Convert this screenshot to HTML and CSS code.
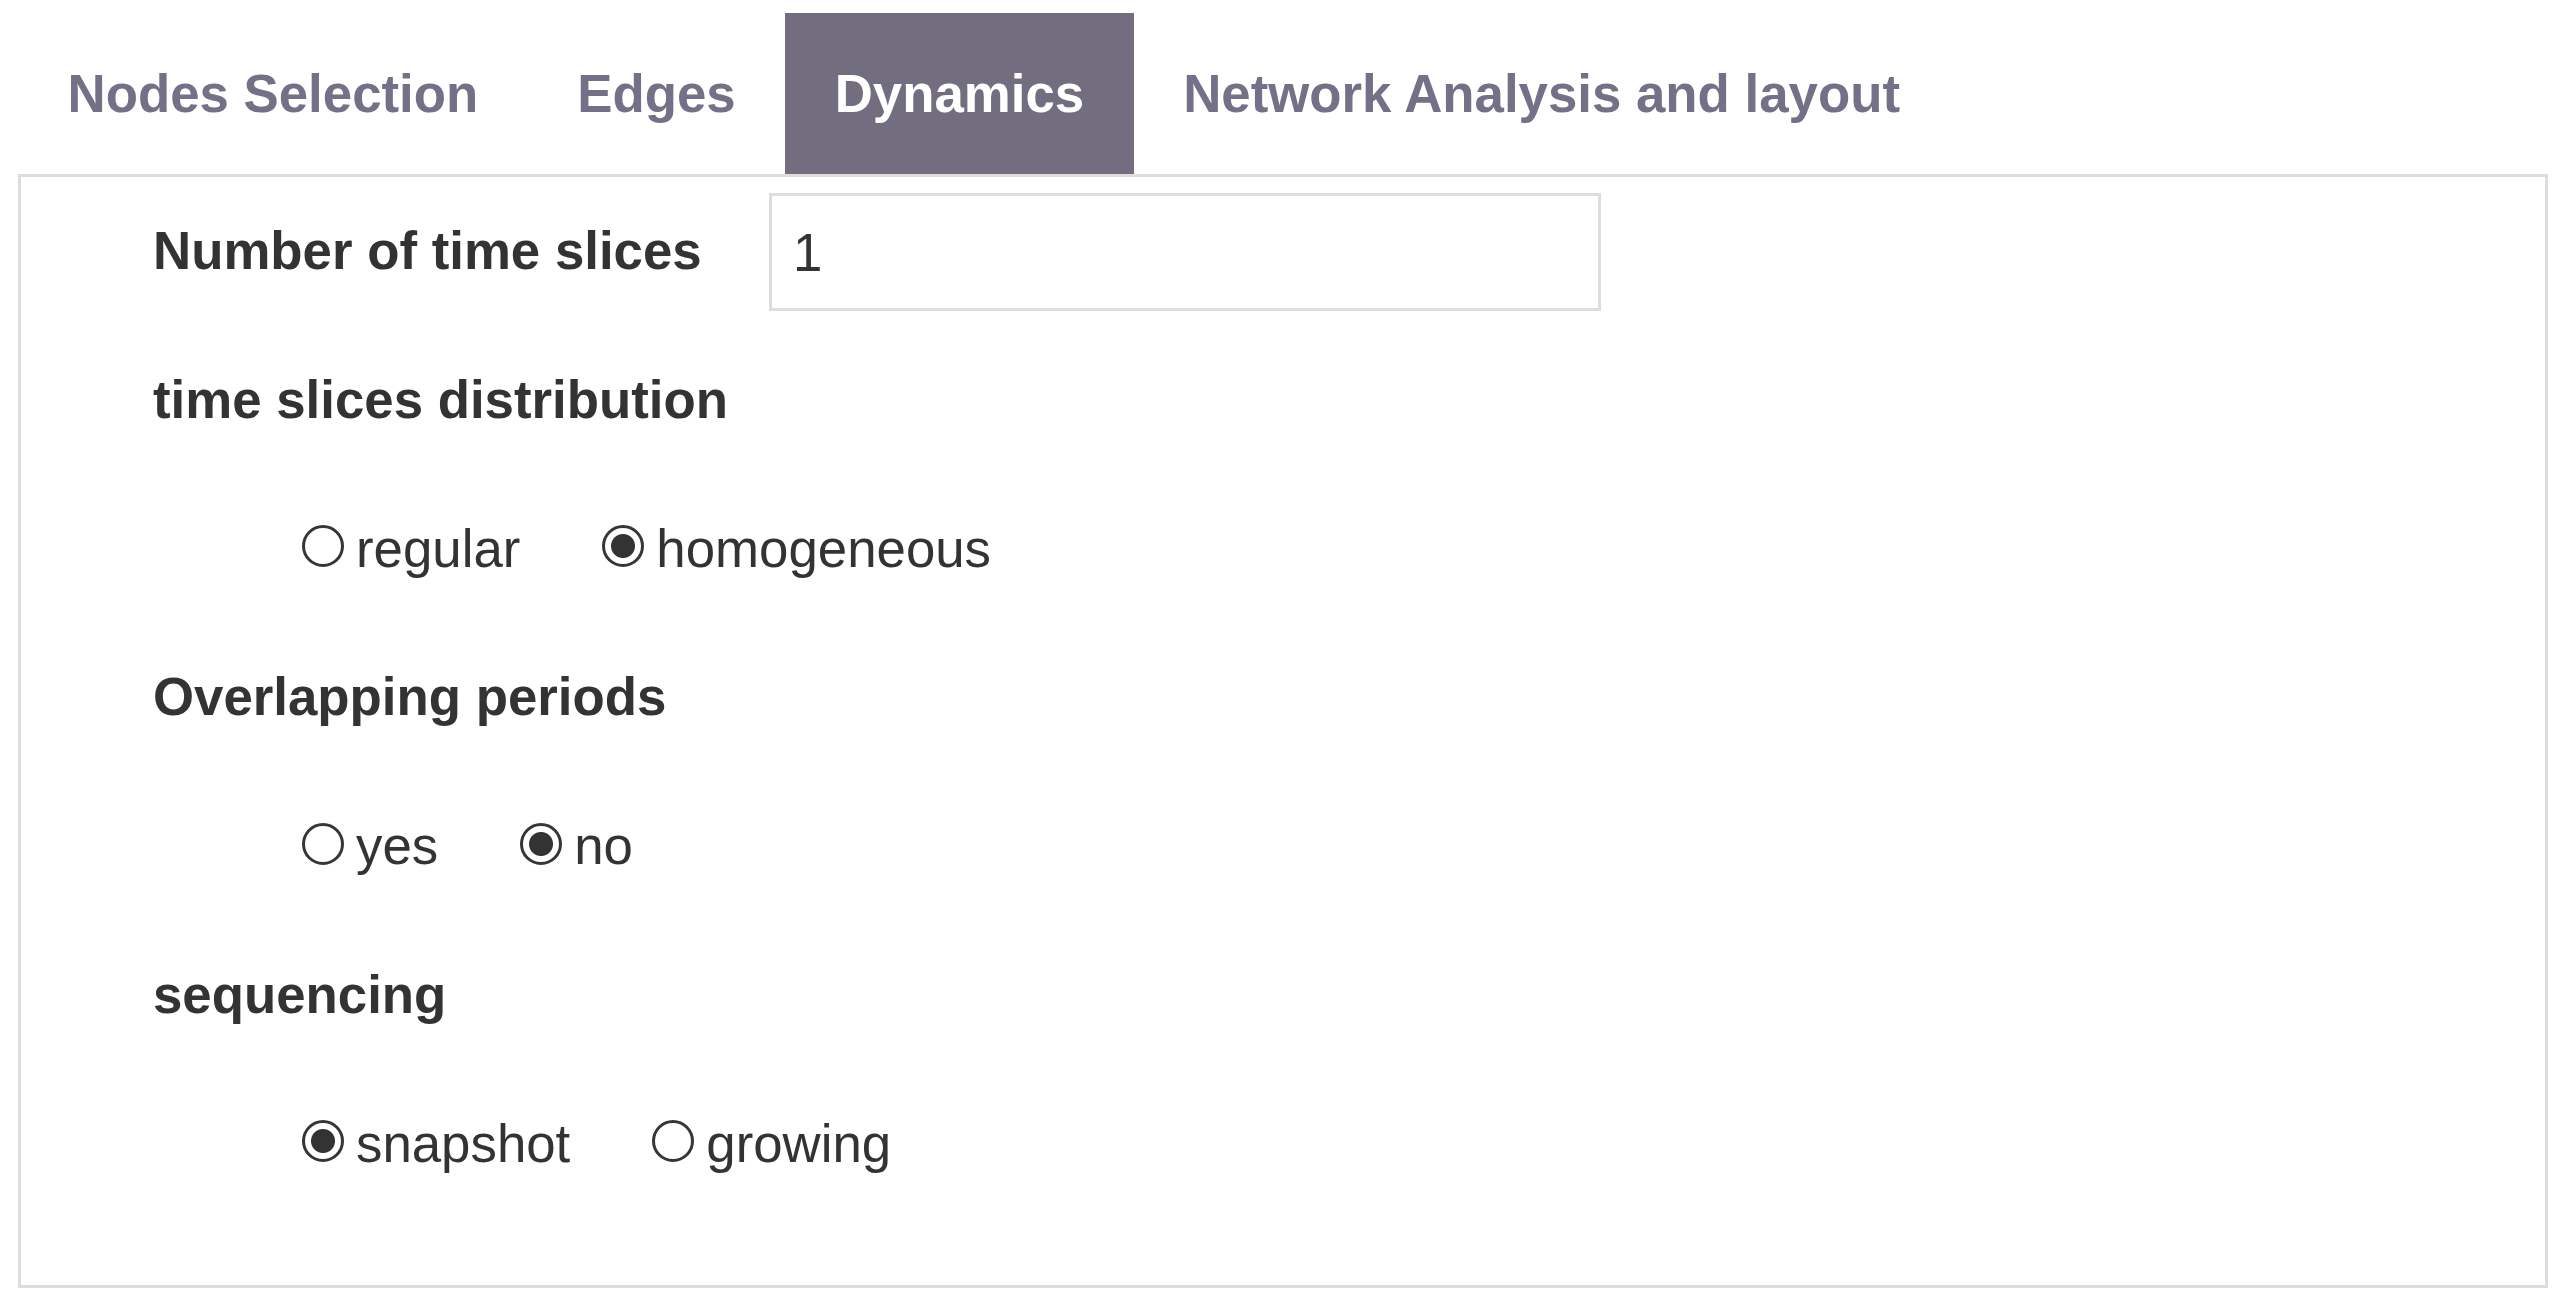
FILE: index.html
```html
<!DOCTYPE html>
<html lang="en">
<head>
<meta charset="utf-8">
<title>Dynamics</title>
<link rel="stylesheet" href="styles.css">
</head>
<body>
<div class="page">
  <nav class="tabs">
    <a class="tab">Nodes Selection</a>
    <a class="tab">Edges</a>
    <a class="tab active">Dynamics</a>
    <a class="tab">Network Analysis and layout</a>
  </nav>
  <section class="panel">
    <div class="row">
      <label class="label label-fixed" for="slices">Number of time slices</label>
      <input class="text-input" id="slices" type="text" value="1">
    </div>
    <div class="row">
      <span class="label">time slices distribution</span>
    </div>
    <div class="row radios">
      <label class="opt"><input class="radio" type="radio" name="dist"><span>regular</span></label>
      <label class="opt"><input class="radio" type="radio" name="dist" checked><span>homogeneous</span></label>
    </div>
    <div class="row">
      <span class="label">Overlapping periods</span>
    </div>
    <div class="row radios">
      <label class="opt"><input class="radio" type="radio" name="overlap"><span>yes</span></label>
      <label class="opt"><input class="radio" type="radio" name="overlap" checked><span>no</span></label>
    </div>
    <div class="row">
      <span class="label">sequencing</span>
    </div>
    <div class="row radios">
      <label class="opt"><input class="radio" type="radio" name="seq" checked><span>snapshot</span></label>
      <label class="opt"><input class="radio" type="radio" name="seq"><span>growing</span></label>
    </div>
  </section>
</div>
</body>
</html>
```

FILE: styles.css
```css
html, body {
  margin: 0;
  padding: 0;
  background: #ffffff;
}

body {
  font-family: "Liberation Sans", Arial, Helvetica, sans-serif;
  font-size: 52.8px;
  color: #333333;
}

.page {
  padding: 13px 12px 0 18px;
}

.tabs {
  display: flex;
  height: 161px;
}

.tab {
  display: flex;
  align-items: center;
  padding: 2px 49.5px 0;
  font-weight: bold;
  color: #757087;
  white-space: nowrap;
  line-height: 1.117;
}

.tab.active {
  background: #736d80;
  color: #ffffff;
}

.panel {
  box-sizing: border-box;
  height: 1114px;
  border: 3px solid #dddddd;
  padding: 0 0 0 132px;
}

.row {
  display: flex;
  align-items: center;
  height: 148.8px;
}

.label {
  font-weight: bold;
  white-space: nowrap;
  line-height: 1.117;
}

.label-fixed {
  width: 616px;
  flex: none;
}

.text-input {
  box-sizing: border-box;
  width: 832px;
  height: 118px;
  margin: 2px 0 0 0;
  border: 3px solid #dddddd;
  border-radius: 0;
  padding: 0 0 0 21px;
  font-family: inherit;
  font-size: 52.8px;
  color: #333333;
  background: #ffffff;
  outline: none;
}

.radios {
  padding-left: 149px;
  gap: 82px;
}

.opt {
  display: flex;
  align-items: center;
  gap: 12px;
  line-height: 1.117;
  white-space: nowrap;
}

.radio {
  appearance: none;
  -webkit-appearance: none;
  box-sizing: border-box;
  width: 42px;
  height: 42px;
  margin: 0 0 6px 0;
  border: 3px solid #363636;
  border-radius: 50%;
  background: #ffffff;
  flex: none;
}

.radio:checked {
  background: radial-gradient(circle, #333333 0 11.5px, #ffffff 12.5px);
}
```
